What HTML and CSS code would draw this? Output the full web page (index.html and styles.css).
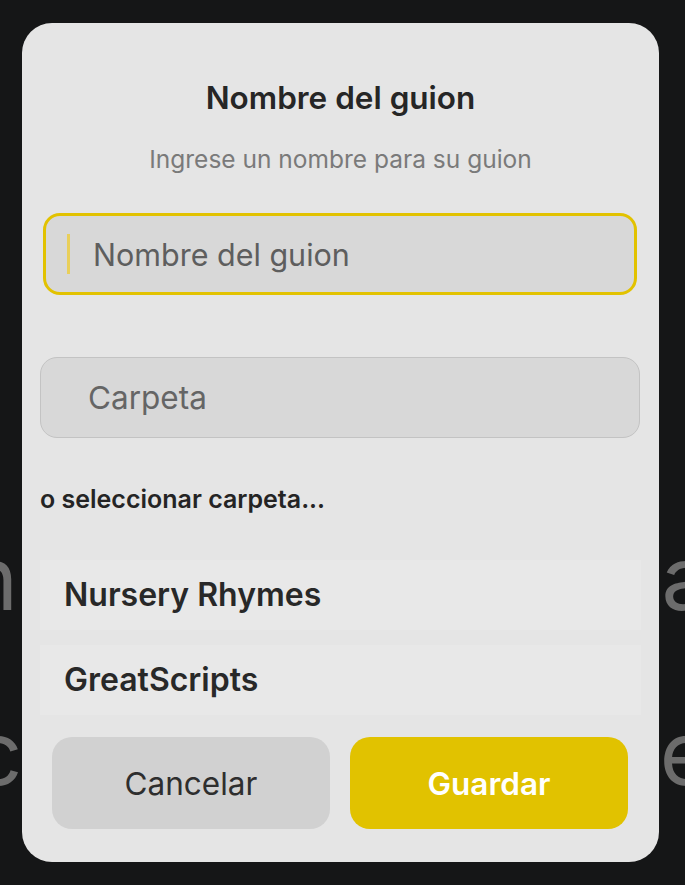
FILE: index.html
```html
<!DOCTYPE html>
<html lang="es">
<head>
<meta charset="utf-8">
<title>Nombre del guion</title>
<link rel="stylesheet" href="styles.css">
</head>
<body>
<div class="page">
  <div class="bg-line bg-line-1"><span class="bg-left">ne</span><span class="bg-right">a</span></div>
  <div class="bg-line bg-line-2"><span class="bg-left">c</span><span class="bg-right">e</span></div>
</div>
<div class="modal">
  <h1 class="title">Nombre del guion</h1>
  <p class="subtitle">Ingrese un nombre para su guion</p>
  <div class="field field-focus"><span class="caret"></span><span class="placeholder">Nombre del guion</span></div>
  <div class="field field-folder"><span class="placeholder">Carpeta</span></div>
  <p class="section-label">o seleccionar carpeta...</p>
  <div class="folder-list">
    <div class="folder-row">Nursery Rhymes</div>
    <div class="folder-row">GreatScripts</div>
  </div>
  <div class="actions">
    <button class="btn btn-cancel">Cancelar</button>
    <button class="btn btn-save">Guardar</button>
  </div>
</div>
</body>
</html>
```

FILE: styles.css
```css
html, body {
  margin: 0;
  padding: 0;
  height: 100%;
}
body {
  background: #151617;
  font-family: "Inter", "Noto Sans", sans-serif;
  overflow: hidden;
}
.page {
  padding-top: 528px;
}
.bg-line {
  display: flex;
  justify-content: space-between;
  font-size: 88px;
  line-height: 100px;
  color: #6c6c6c;
  height: 175px;
}
.bg-left {
  margin-left: -34px;
}
.bg-right {
  margin-right: -26px;
}
.bg-line-2 .bg-left {
  margin-left: -28px;
}
.modal {
  position: absolute;
  left: 22px;
  top: 23px;
  width: 637px;
  height: 839px;
  box-sizing: border-box;
  padding: 57px 18px 33px;
  background: #e5e5e5;
  border-radius: 30px;
  display: flex;
  flex-direction: column;
}
.title {
  margin: 0;
  height: 36px;
  line-height: 36px;
  font-size: 31.5px;
  font-weight: 600;
  color: #262626;
  text-align: center;
}
.subtitle {
  margin: 29px 0 0;
  height: 28px;
  line-height: 28px;
  font-size: 24.5px;
  color: #7a7a7a;
  text-align: center;
}
.field {
  box-sizing: border-box;
  background: #d8d8d8;
  border-radius: 17px;
  display: flex;
  align-items: center;
}
.field-focus {
  margin: 40px 4px 0 3px;
  height: 82px;
  border: 3px solid #e2c200;
  padding-left: 21px;
}
.caret {
  width: 3px;
  height: 40px;
  background: #e9cf5a;
  margin-right: 23px;
}
.field-folder {
  margin: 62px 1px 0 0;
  height: 81px;
  border: 1px solid #c3c3c3;
  padding-left: 47px;
}
.placeholder {
  font-size: 30.5px;
  color: #5e5e5e;
}
.field-folder .placeholder {
  font-size: 31.5px;
  color: #656565;
}
.section-label {
  margin: 47px 0 0;
  height: 28px;
  line-height: 28px;
  font-size: 25px;
  font-weight: 600;
  color: #242424;
}
.folder-list {
  margin-top: 47px;
  display: flex;
  flex-direction: column;
  gap: 15px;
}
.folder-row {
  height: 70px;
  line-height: 70px;
  padding-left: 24px;
  background: #e8e8e8;
  font-size: 32px;
  font-weight: 600;
  color: #282828;
}
.actions {
  margin: 22px 13px 0 12px;
  display: flex;
  gap: 20px;
}
.btn {
  flex: 1;
  height: 92px;
  border: none;
  border-radius: 20px;
  font-family: "Inter", "Noto Sans", sans-serif;
  font-size: 31.5px;
}
.btn-cancel {
  background: #d1d1d1;
  color: #2e2e2e;
}
.btn-save {
  background: #e1c200;
  color: #ffffff;
  font-weight: 600;
}
```
